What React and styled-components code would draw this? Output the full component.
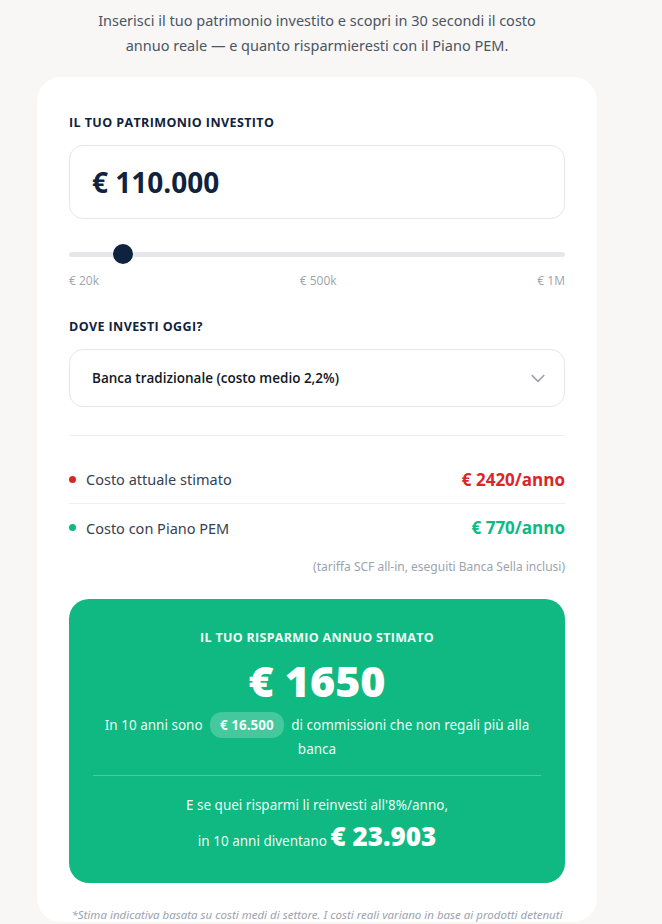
import styled, { createGlobalStyle } from "styled-components";

const GlobalStyle = createGlobalStyle`
  * { box-sizing: border-box; }
  body {
    margin: 0;
    background: #f8f7f5;
    font-family: "Open Sans", "Noto Sans", sans-serif;
    color: #0f2340;
  }
`;

const MIN = 20000;
const MAX = 1000000;
const amount = 110000;

export default function App() {
  const pct = (amount - MIN) / (MAX - MIN);

  return (
    <>
      <GlobalStyle />
      <Page>
        <Intro>
          Inserisci il tuo patrimonio investito e scopri in 30 secondi il costo
          <br />
          annuo reale — e quanto risparmieresti con il Piano PEM.
        </Intro>

        <Card>
          <Label>Il tuo patrimonio investito</Label>
          <AmountBox>€ 110.000</AmountBox>

          <Slider>
            <Track />
            <Thumb style={{ left: `calc(${pct * 100}% - ${pct * 20}px)` }} />
          </Slider>
          <Ticks>
            <span>€ 20k</span>
            <span>€ 500k</span>
            <span>€ 1M</span>
          </Ticks>

          <Label $top={30}>Dove investi oggi?</Label>
          <Select>
            <span>Banca tradizionale (costo medio 2,2%)</span>
            <svg width="20" height="20" viewBox="0 0 24 24" fill="none" stroke="#9ca3af" strokeWidth="2" strokeLinecap="round" strokeLinejoin="round">
              <path d="M5 9l7 7 7-7" />
            </svg>
          </Select>

          <Divider />

          <CostRow>
            <RowLabel>
              <Dot $color="#dc2626" />
              Costo attuale stimato
            </RowLabel>
            <RowValue $color="#dc2626">€ 2420/anno</RowValue>
          </CostRow>
          <CostRow $last>
            <RowLabel>
              <Dot $color="#10b981" />
              Costo con Piano PEM
            </RowLabel>
            <RowValue $color="#10b981">€ 770/anno</RowValue>
          </CostRow>
          <Note>(tariffa SCF all-in, eseguiti Banca Sella inclusi)</Note>

          <SavingsBox>
            <SavingsTitle>Il tuo risparmio annuo stimato</SavingsTitle>
            <SavingsAmount>€ 1650</SavingsAmount>
            <SavingsText>
              In 10 anni sono <Pill>€ 16.500</Pill> di commissioni che non regali più alla
              banca
            </SavingsText>
            <SavingsDivider />
            <SavingsText>E se quei risparmi li reinvesti all'8%/anno,</SavingsText>
            <FutureLine>
              in 10 anni diventano <BigNumber>€ 23.903</BigNumber>
            </FutureLine>
          </SavingsBox>

          <Disclaimer>
            *Stima indicativa basata su costi medi di settore. I costi reali variano in base ai prodotti detenuti
          </Disclaimer>
        </Card>
      </Page>
    </>
  );
}

const Page = styled.div`
  width: 662px;
  padding: 8px 65px 0 37px;
  display: flex;
  flex-direction: column;
  height: 924px;
  overflow: hidden;
`;

const Intro = styled.p`
  margin: 0 0 19px;
  text-align: center;
  font-family: "Noto Sans", "Open Sans", sans-serif;
  font-size: 14.5px;
  line-height: 25px;
  color: #4b5563;
`;

const Card = styled.div`
  background: #fff;
  border-radius: 24px;
  padding: 38px 32px 0;
  display: flex;
  flex-direction: column;
`;

const Label = styled.div`
  margin-top: ${(p) => p.$top || 0}px;
  font-size: 12.5px;
  font-weight: 700;
  letter-spacing: 0.4px;
  text-transform: uppercase;
  color: #0f2340;
  line-height: 16px;
`;

const AmountBox = styled.div`
  margin-top: 14px;
  height: 74px;
  border: 1px solid #e5e7eb;
  border-radius: 14px;
  padding: 0 22px;
  display: flex;
  align-items: center;
  font-size: 28px;
  font-weight: 700;
  color: #0f2340;
`;

const Slider = styled.div`
  position: relative;
  margin-top: 24px;
  height: 22px;
  display: flex;
  align-items: center;
`;

const Track = styled.div`
  width: 100%;
  height: 5px;
  border-radius: 3px;
  background: #e5e7eb;
`;

const Thumb = styled.div`
  position: absolute;
  top: 1px;
  width: 20px;
  height: 20px;
  border-radius: 50%;
  background: #0f2340;
`;

const Ticks = styled.div`
  margin-top: 8px;
  display: flex;
  justify-content: space-between;
  font-size: 12px;
  color: #9ca3af;
  line-height: 16px;
`;

const Select = styled.div`
  margin-top: 14px;
  height: 58px;
  border: 1px solid #e5e7eb;
  border-radius: 14px;
  padding: 0 16px 0 22px;
  display: flex;
  align-items: center;
  justify-content: space-between;
  font-size: 13.5px;
  font-weight: 600;
  color: #111827;
`;

const Divider = styled.div`
  margin-top: 28px;
  height: 1px;
  background: #eeeeee;
`;

const CostRow = styled.div`
  display: flex;
  align-items: center;
  justify-content: space-between;
  height: 47px;
  margin-top: ${(p) => (p.$last ? 0 : 21)}px;
  border-bottom: ${(p) => (p.$last ? "none" : "1px solid #f0f0f0")};
  padding-bottom: ${(p) => (p.$last ? 0 : 2)}px;
`;

const RowLabel = styled.div`
  display: flex;
  align-items: center;
  gap: 10px;
  font-family: "Noto Sans", "Open Sans", sans-serif;
  font-size: 14.5px;
  color: #374151;
`;

const Dot = styled.span`
  width: 7px;
  height: 7px;
  border-radius: 50%;
  background: ${(p) => p.$color};
`;

const RowValue = styled.div`
  font-size: 17px;
  font-weight: 700;
  color: ${(p) => p.$color};
`;

const Note = styled.div`
  margin-top: 7px;
  text-align: right;
  font-family: "Noto Sans", "Open Sans", sans-serif;
  font-size: 12px;
  color: #9ca3af;
`;

const SavingsBox = styled.div`
  margin-top: 24px;
  background: #10b981;
  border-radius: 20px;
  padding: 31px 24px 29px;
  display: flex;
  flex-direction: column;
  align-items: center;
  text-align: center;
  color: #fff;
`;

const SavingsTitle = styled.div`
  font-size: 12.5px;
  font-weight: 700;
  letter-spacing: 0.3px;
  text-transform: uppercase;
  line-height: 16px;
  opacity: 0.95;
`;

const SavingsAmount = styled.div`
  margin: 11px 0 7px;
  font-size: 43px;
  font-weight: 800;
  line-height: 48px;
`;

const SavingsText = styled.div`
  font-family: "Noto Sans", "Open Sans", sans-serif;
  font-size: 13.5px;
  line-height: 23px;
  max-width: 440px;
  color: rgba(255, 255, 255, 0.95);
`;

const Pill = styled.span`
  display: inline-block;
  margin: 0 4px;
  padding: 0 10px;
  border-radius: 12px;
  background: rgba(255, 255, 255, 0.22);
  font-family: "Open Sans", sans-serif;
  font-weight: 700;
  line-height: 26px;
`;

const SavingsDivider = styled.div`
  align-self: stretch;
  margin: 14px 0 18px;
  height: 1px;
  background: rgba(255, 255, 255, 0.25);
`;

const FutureLine = styled.div`
  margin-top: 1px;
  font-family: "Noto Sans", "Open Sans", sans-serif;
  font-size: 13.5px;
  color: rgba(255, 255, 255, 0.95);
`;

const BigNumber = styled.span`
  font-family: "Open Sans", sans-serif;
  font-size: 26px;
  font-weight: 800;
  color: #fff;
`;

const Disclaimer = styled.div`
  margin-top: 24px;
  text-align: center;
  font-family: "Noto Sans", "Open Sans", sans-serif;
  font-size: 11.5px;
  font-style: italic;
  color: #9ca3af;
  white-space: nowrap;
`;
